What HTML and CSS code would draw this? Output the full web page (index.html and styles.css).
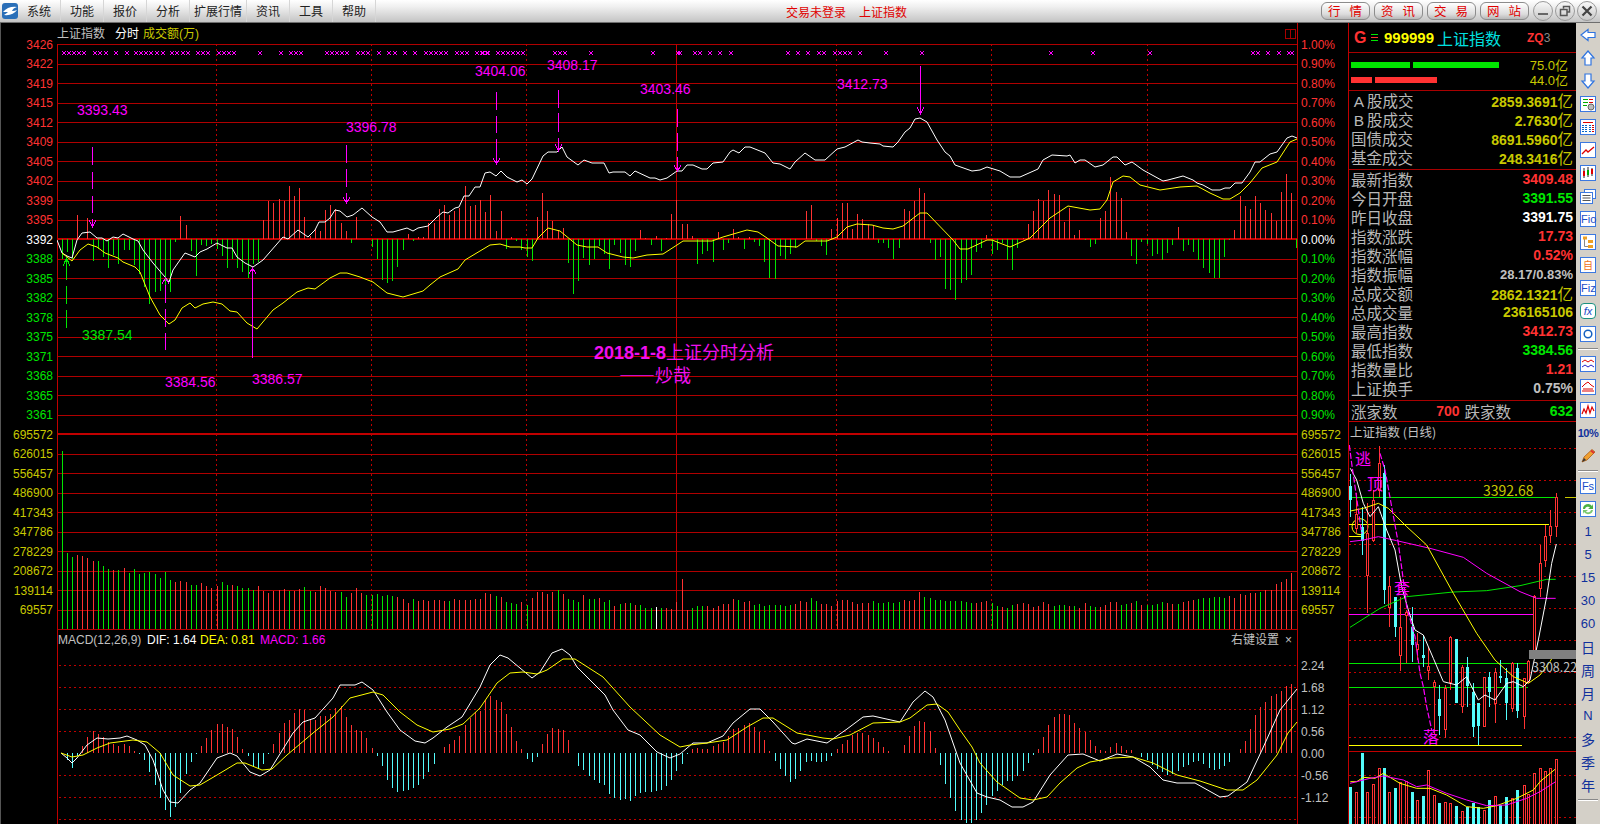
FILE: index.html
```html
<!DOCTYPE html>
<html lang="zh-CN">
<head>
<meta charset="utf-8">
<title>上证指数 分时</title>
<link rel="stylesheet" href="styles.css">
</head>
<body>
<div class="app">
  <header class="menubar">
    <svg class="logo" width="16" height="16" viewBox="0 0 16 16"><rect width="16" height="16" rx="3" fill="#2a6fb8"/><path d="M1 9 Q6 3 15 4 Q11 5 10 8 Q13 8 15 7 Q11 13 2 12 Q5 10 6 9 Z" fill="#fff"/></svg>
    <nav class="menu">
      <span class="menu-item">系统</span><span class="menu-item">功能</span><span class="menu-item">报价</span><span class="menu-item">分析</span><span class="menu-item menu-item-wide">扩展行情</span><span class="menu-item">资讯</span><span class="menu-item">工具</span><span class="menu-item">帮助</span>
    </nav>
    <div class="notice"><span>交易未登录</span><span>上证指数</span></div>
    <div class="links">
      <span class="pill">行情</span><span class="pill">资讯</span><span class="pill">交易</span><span class="pill">网站</span>
    </div>
    <div class="win-btns">
      <span class="win-btn"><svg width="12" height="12" viewBox="0 0 12 12"><rect x="1" y="8" width="10" height="2" fill="#666"/></svg></span>
      <span class="win-btn"><svg width="12" height="12" viewBox="0 0 12 12"><path d="M4.500 3.500V1.500H10.500V7H8M1.500 4.500H8V10.500H1.500Z" fill="none" stroke="#555" stroke-width="1.500"/></svg></span>
      <span class="win-btn"><svg width="12" height="12" viewBox="0 0 12 12"><path d="M1.500 1.500L10.500 10.500M10.500 1.500L1.500 10.500" stroke="#444" stroke-width="2.200"/></svg></span>
    </div>
  </header>

  <main class="workspace">
    <div class="axis axis-left">
      <div class="tick up">3426</div><div class="tick up">3422</div><div class="tick up">3419</div><div class="tick up">3415</div><div class="tick up">3412</div><div class="tick up">3409</div><div class="tick up">3405</div><div class="tick up">3402</div><div class="tick up">3399</div><div class="tick up">3395</div>
      <div class="tick flat">3392</div>
      <div class="tick down">3388</div><div class="tick down">3385</div><div class="tick down">3382</div><div class="tick down">3378</div><div class="tick down">3375</div><div class="tick down">3371</div><div class="tick down">3368</div><div class="tick down">3365</div><div class="tick down">3361</div>
      <div class="tick vol">695572</div><div class="tick vol">626015</div><div class="tick vol">556457</div><div class="tick vol">486900</div><div class="tick vol">417343</div><div class="tick vol">347786</div><div class="tick vol">278229</div><div class="tick vol">208672</div><div class="tick vol">139114</div><div class="tick vol">69557</div>
    </div>

    <svg id="main-chart" class="main-chart" width="1241" height="801" viewBox="57 23 1241 801">
      <g id="grid"></g>
      <g id="series"></g>
      <rect class="frame-icon" x="1285.500" y="29.500" width="10" height="9"/><path class="frame-icon" d="M1290.500 29.500V38.500"/>
      <text class="t-head gray" x="57" y="38">上证指数</text>
      <text class="t-head white" x="115" y="38">分时</text>
      <text class="t-head olive" x="143" y="38">成交额(万)</text>

      <path class="arrow" d="M92.500 147V165M92.500 172V189M92.500 196V213M92.500 219V227M89 220L92.500 227L96 220"/>
      <path class="arrow" d="M346.500 145V163M346.500 169V187M346.500 193V203M343 197L346.500 203L350 197"/>
      <path class="arrow" d="M496.500 92V110M496.500 116V133M496.500 139V164M493 158L496.500 164L500 158"/>
      <path class="arrow" d="M558.500 90V108M558.500 113V132M558.500 138V150M555 144L558.500 151L562 144"/>
      <path class="arrow" d="M677.500 109V127M677.500 133V151M677.500 157V171M674 165L677.500 171L681 165"/>
      <path class="arrow" d="M920.500 66V113M917 107L920.500 114L924 107"/>
      <path class="arrow" d="M165.500 285V303M165.500 309V327M165.500 333V350M162 284L165.500 278L169 284"/>
      <path class="arrow" d="M252.500 268V358M249 274L252.500 268L256 274"/>
      <path class="arrow arrow-green" d="M66.500 258V280M66.500 286V304M66.500 310V328M63 266L66.500 258L70 266"/>

      <text class="t-price" x="77" y="115">3393.43</text>
      <text class="t-price" x="346" y="132">3396.78</text>
      <text class="t-price" x="475" y="76">3404.06</text>
      <text class="t-price" x="547" y="70">3408.17</text>
      <text class="t-price" x="640" y="94">3403.46</text>
      <text class="t-price" x="837" y="89">3412.73</text>
      <text class="t-price" x="165" y="387">3384.56</text>
      <text class="t-price" x="252" y="384">3386.57</text>
      <text class="t-price t-price-green" x="82" y="340">3387.54</text>
      <text class="t-note" x="594" y="359"><tspan class="t-note-date">2018-1-8</tspan>上证分时分析</text>
      <text class="t-note" x="619" y="382">——炒哉</text>

      <text class="t-head gray" x="58" y="644">MACD(12,26,9)</text>
      <text class="t-head white" x="147" y="644">DIF: 1.64</text>
      <text class="t-head yellow" x="200" y="644">DEA: 0.81</text>
      <text class="t-head magenta" x="260" y="644">MACD: 1.66</text>
      <text class="t-head gray" x="1231" y="644">右键设置</text>
      <text class="t-head gray" x="1285" y="644">×</text>
    </svg>

    <div class="axis axis-right">
      <div class="tick up">1.00%</div><div class="tick up">0.90%</div><div class="tick up">0.80%</div><div class="tick up">0.70%</div><div class="tick up">0.60%</div><div class="tick up">0.50%</div><div class="tick up">0.40%</div><div class="tick up">0.30%</div><div class="tick up">0.20%</div><div class="tick up">0.10%</div>
      <div class="tick flat">0.00%</div>
      <div class="tick down">0.10%</div><div class="tick down">0.20%</div><div class="tick down">0.30%</div><div class="tick down">0.40%</div><div class="tick down">0.50%</div><div class="tick down">0.60%</div><div class="tick down">0.70%</div><div class="tick down">0.80%</div><div class="tick down">0.90%</div>
      <div class="tick vol">695572</div><div class="tick vol">626015</div><div class="tick vol">556457</div><div class="tick vol">486900</div><div class="tick vol">417343</div><div class="tick vol">347786</div><div class="tick vol">278229</div><div class="tick vol">208672</div><div class="tick vol">139114</div><div class="tick vol">69557</div>
      <div class="macd-ticks">
        <div class="tick-m">2.24</div><div class="tick-m">1.68</div><div class="tick-m">1.12</div><div class="tick-m">0.56</div><div class="tick-m">0.00</div><div class="tick-m">-0.56</div><div class="tick-m">-1.12</div>
      </div>
    </div>

    <aside class="quote">
      <div class="quote-head">
        <span class="q-g">G</span>
        <span class="q-menu"><i></i><i></i><i></i></span>
        <span class="q-code">999999</span>
        <span class="q-name">上证指数</span>
        <span class="q-zq">ZQ<em>3</em></span>
      </div>
      <div class="flow">
        <div class="flow-row"><span class="flow-bars"><i class="fb fb-g fb-59"></i><i class="fb fb-g fb-86"></i></span><span class="flow-val">75.0亿</span></div>
        <div class="flow-row"><span class="flow-bars"><i class="fb fb-r fb-21"></i><i class="fb fb-r fb-62"></i></span><span class="flow-val">44.0亿</span></div>
      </div>
      <div class="stats stats-a">
        <div class="stat"><span class="s-l"><b class="wide">A</b>股成交</span><span class="s-v olive">2859.3691<u>亿</u></span></div>
        <div class="stat"><span class="s-l"><b class="wide">B</b>股成交</span><span class="s-v olive">2.7630<u>亿</u></span></div>
        <div class="stat"><span class="s-l">国债成交</span><span class="s-v olive">8691.5960<u>亿</u></span></div>
        <div class="stat"><span class="s-l">基金成交</span><span class="s-v olive">248.3416<u>亿</u></span></div>
      </div>
      <div class="stats stats-b">
        <div class="stat"><span class="s-l">最新指数</span><span class="s-v red">3409.48</span></div>
        <div class="stat"><span class="s-l">今日开盘</span><span class="s-v green">3391.55</span></div>
        <div class="stat"><span class="s-l">昨日收盘</span><span class="s-v white">3391.75</span></div>
        <div class="stat"><span class="s-l">指数涨跌</span><span class="s-v red">17.73</span></div>
        <div class="stat"><span class="s-l">指数涨幅</span><span class="s-v red">0.52%</span></div>
        <div class="stat"><span class="s-l">指数振幅</span><span class="s-v gray s-small">28.17/0.83%</span></div>
        <div class="stat"><span class="s-l">总成交额</span><span class="s-v olive">2862.1321<u>亿</u></span></div>
        <div class="stat"><span class="s-l">总成交量</span><span class="s-v olive">236165106</span></div>
        <div class="stat"><span class="s-l">最高指数</span><span class="s-v red">3412.73</span></div>
        <div class="stat"><span class="s-l">最低指数</span><span class="s-v green">3384.56</span></div>
        <div class="stat"><span class="s-l">指数量比</span><span class="s-v red">1.21</span></div>
        <div class="stat"><span class="s-l">上证换手</span><span class="s-v gray">0.75%</span></div>
      </div>
      <div class="breadth"><span class="s-l">涨家数</span><span class="s-v red b-up">700</span><span class="s-l b-down">跌家数</span><span class="s-v green b-end">632</span></div>
      <div class="mini-title">上证指数 (日线)</div>
      <svg id="mini-chart" class="mini-chart" width="227" height="382" viewBox="1349 442 227 382">
        <g id="mini-series"></g>
        <rect class="mini-tag" x="1529" y="650" width="47" height="9"/>
        <text class="t-mini-val" x="1483" y="496">3392.68</text>
        <text class="t-mini-tag" x="1532" y="672">3308.22</text>
        <text class="t-mini-note" x="1355" y="465">逃</text>
        <text class="t-mini-note" x="1367" y="490">顶</text>
        <text class="t-mini-note" x="1394" y="594">套</text>
        <text class="t-mini-note" x="1423" y="743">落</text>
      </svg>
    </aside>

    <nav class="toolbar">
      <span class="tool"><svg class="ico" viewBox="0 0 16 16"><path class="ar" d="M1 8L8 2.500V5.500H15V10.500H8V13.500Z"/></svg></span>
      <span class="tool"><svg class="ico" viewBox="0 0 16 16"><path class="ar" d="M8 1L14 8H11V15H5V8H2Z"/></svg></span>
      <span class="tool"><svg class="ico" viewBox="0 0 16 16"><path class="ar" d="M8 15L14 8H11V1H5V8H2Z"/></svg></span>
      <span class="tool"><svg class="ico" viewBox="0 0 16 16"><rect class="bx" x=".5" y=".5" width="15" height="15"/><path d="M3 3.500H8M3 6.500H8M3 9.500H7" stroke="#0a0"/><path d="M9 3.500H13M9 6.500H13" stroke="#d00"/><circle cx="11" cy="11" r="3" fill="#bbb" stroke="#666"/></svg></span>
      <span class="tool"><svg class="ico" viewBox="0 0 16 16"><rect class="bx" x=".5" y=".5" width="15" height="15"/><path d="M3 3.500H13" stroke="#d00"/><path d="M3 6V13M6 6V13M10 6V13" stroke="#06c" stroke-dasharray="1 1" stroke-width="2"/><path d="M13 6V13" stroke="#d00" stroke-dasharray="1 1" stroke-width="2"/></svg></span>
      <span class="tool"><svg class="ico" viewBox="0 0 16 16"><rect class="bx" x=".5" y=".5" width="15" height="15"/><path d="M2 12L6 8L8 10L14 5" fill="none" stroke="#d00" stroke-width="1.300"/></svg></span>
      <span class="tool"><svg class="ico" viewBox="0 0 16 16"><rect class="bx" x=".5" y=".5" width="15" height="15"/><path d="M4 3V13M8 2V12M12 3V11" stroke="#222"/><rect x="3" y="6" width="2" height="5" fill="#d00"/><rect x="7" y="5" width="2" height="5" fill="#0a0"/><rect x="11" y="4" width="2" height="5" fill="#d00"/></svg></span>
      <span class="tool"><svg class="ico" viewBox="0 0 16 16"><rect x="4.500" y="1.500" width="11" height="9" fill="#fff" stroke="#3b78e0"/><rect x=".5" y="4.500" width="12" height="11" fill="#fff" stroke="#3b78e0"/><path d="M2.500 7.500H10.500M2.500 10H10.500M2.500 12.500H10.500" stroke="#555"/></svg></span>
      <span class="tool tool-box"><b class="ft">Fio</b></span>
      <span class="tool"><svg class="ico" viewBox="0 0 16 16"><rect class="bx" x=".5" y=".5" width="15" height="15"/><path d="M4.500 3V12.500H9" fill="none" stroke="#888"/><rect x="3" y="2.500" width="4" height="3" fill="#f0a020"/><rect x="8" y="6" width="5" height="3" fill="#f0a020"/><rect x="8" y="11" width="5" height="3" fill="#f0a020"/></svg></span>
      <span class="tool tool-box"><b class="ft ft-o">自</b></span>
      <span class="tool tool-box"><b class="ft">Fiz</b></span>
      <span class="tool tool-box tool-fx"><b class="ft">fx</b></span>
      <span class="tool"><svg class="ico" viewBox="0 0 16 16"><rect class="bx" x=".5" y=".5" width="15" height="15"/><circle cx="8" cy="8" r="3.800" fill="none" stroke="#1560c0" stroke-width="1.500"/></svg></span>
      <span class="tool-sep"></span>
      <span class="tool"><svg class="ico" viewBox="0 0 16 16"><rect class="bx" x=".5" y=".5" width="15" height="15"/><path d="M2 6L5 4L8 6L11 4L14 6" fill="none" stroke="#d00"/><path d="M2 11L5 9L8 11L11 9L14 11" fill="none" stroke="#22c"/></svg></span>
      <span class="tool"><svg class="ico" viewBox="0 0 16 16"><rect class="bx" x=".5" y=".5" width="15" height="15"/><path d="M2 8L5 5L8 3L11 6L14 8" fill="none" stroke="#d00"/><path d="M2 12H14M3 10H13" stroke="#d00"/></svg></span>
      <span class="tool"><svg class="ico" viewBox="0 0 16 16"><rect class="bx" x=".5" y=".5" width="15" height="15"/><path d="M2 12L4 7L6 11L8 4L10 11L12 5L14 9" fill="none" stroke="#d00" stroke-width="1.200"/></svg></span>
      <span class="tool tool-text tool-pct">10%</span>
      <span class="tool"><svg class="ico" viewBox="0 0 16 16"><path d="M2 14L4 9L12 1.500L15 4L7 12Z" fill="#f0a030" stroke="#a05010" stroke-width=".7"/><path d="M2 14L4 10L6 12Z" fill="#333"/><path d="M11 2.500L14 5" stroke="#d33" stroke-width="2"/></svg></span>
      <span class="tool-sep"></span>
      <span class="tool tool-box"><b class="ft">Fs</b></span>
      <span class="tool"><svg class="ico" viewBox="0 0 16 16"><rect class="bx" x=".5" y=".5" width="15" height="15"/><path d="M3 8A5 5 0 0 1 12 5L13 3V8H8L10 6.500A3 3 0 0 0 5 8Z" fill="#4bb043"/><path d="M13 9A5 5 0 0 1 4 11L3 13V9H8L6 10.500A3 3 0 0 0 11 9Z" fill="#7cc96f"/></svg></span>
      <span class="tool tool-text">1</span><span class="tool tool-text">5</span><span class="tool tool-text">15</span><span class="tool tool-text">30</span><span class="tool tool-text">60</span>
      <span class="tool tool-cjk">日</span><span class="tool tool-cjk">周</span><span class="tool tool-cjk">月</span><span class="tool tool-text">N</span><span class="tool tool-cjk">多</span><span class="tool tool-cjk">季</span><span class="tool tool-cjk">年</span>
      <span class="tool-sep"></span>
    </nav>
  </main>
</div>
<script src="chart.js"></script>
</body>
</html>
```
FILE: styles.css
```css
* { box-sizing: border-box; }
html, body { margin: 0; height: 100%; background: #000; overflow: hidden; }
body { font-family: "Liberation Sans", "Noto Sans CJK SC", sans-serif; }
.app { width: 1600px; height: 824px; display: flex; flex-direction: column; }

/* menu bar */
.menubar {
  height: 23px; flex: none; display: flex; align-items: center;
  background: linear-gradient(#ffffff, #f0f0f0 30%, #c4c4c4);
  border-bottom: 1px solid #6e6e6e;
  font-family: "Noto Sans CJK SC", sans-serif; font-size: 12px; color: #222;
}
.logo { margin-left: 2px; flex: none; }
.menu { display: flex; }
.menu-item { width: 43px; text-align: center; line-height: 22px; border-right: 1px solid #d6d6d6; }
.menu-item-wide { width: 57px; }
.notice { margin-left: 410px; color: #e00000; display: flex; gap: 13px; font-size: 12px; }
.links { margin-left: auto; display: flex; gap: 4px; }
.pill {
  width: 49px; height: 18px; line-height: 16px; text-align: left; color: #e00000;
  font-size: 12.500px; letter-spacing: 9px; padding-left: 6px; white-space: nowrap; overflow: hidden;
  border: 1px solid #8c8c8c; border-radius: 6px;
  background: linear-gradient(#fff, #dcdcdc 70%, #b8b8b8);
}
.win-btns { display: flex; gap: 2px; margin: 0 3px 0 4px; }
.win-btn {
  width: 20px; height: 20px; border-radius: 50%; border: 1px solid #999;
  background: linear-gradient(#f8f8f8, #c8c8c8);
  display: flex; align-items: center; justify-content: center;
}

/* work area */
.workspace { flex: 1; min-height: 0; display: flex; background: #000; }
.axis { flex: none; display: flex; flex-direction: column; padding-top: 12.500px; font-size: 12px; }
.axis-left { width: 57px; text-align: right; padding-right: 4px; border-left: 1px solid #555; }
.axis-right { width: 50px; padding-left: 3px; }
.tick { height: 19.500px; line-height: 19.500px; }
.up { color: #ff3232; }
.flat { color: #fff; }
.down { color: #00e600; }
.vol { color: #c8c800; }
.macd-ticks { margin-top: 34px; color: #c0c0c0; }
.tick-m { height: 22px; line-height: 22px; }
.main-chart { flex: none; display: block; }

/* chart text */
.t-head { font-size: 12px; }
.gray { fill: #c0c0c0; color: #c0c0c0; }
.white { fill: #fff; color: #fff; }
.olive { fill: #c8c800; color: #c8c800; }
.yellow { fill: #ffff00; }
.magenta { fill: #ff00ff; }
.red { color: #ff3232; }
.green { color: #00e600; }
.t-price { font-size: 14px; fill: #ff00ff; }
.t-price-green { fill: #00e600; }
.t-note { font-size: 18px; fill: #f010f0; font-family: "Noto Sans CJK SC", sans-serif; }
.t-note-date { font-weight: bold; font-family: "Liberation Sans", sans-serif; }
.arrow { fill: none; stroke: #ff00ff; stroke-width: 1; shape-rendering: crispEdges; }
.arrow-green { stroke: #00e600; }
.frame-icon { fill: none; stroke: #a80000; shape-rendering: crispEdges; }
.grid-line { stroke: #b00000; fill: none; }
.grid-thick { stroke: #c00000; stroke-width: 2; }
.grid-dot { stroke: #c00000; stroke-dasharray: 2 3; }
.grid-frame { stroke: #c00000; }
.s-bar { fill: none; stroke-width: 1; shape-rendering: crispEdges; }
.s-red { stroke: #ff3232; }
.s-green { stroke: #00e600; }
.s-cyan { stroke: #54fcfc; }
.s-white { stroke: #fff; }
.s-line { fill: none; stroke-width: 1; stroke-linejoin: round; }
.s-ylw { stroke: #ffff00; }
.s-wht { stroke: #ffffff; }
.s-mag { stroke: #ff00ff; }
.s-grn { stroke: #00e600; }
.s-crisp { shape-rendering: crispEdges; }
.marks { fill: none; stroke: #ff00ff; stroke-width: 1; }

/* quote panel */
.quote { width: 228px; flex: none; display: flex; flex-direction: column; border-left: 1px solid #c00000; font-family: "Noto Sans CJK SC", sans-serif; }
.quote-head { height: 30px; flex: none; display: flex; align-items: center; padding-left: 5px; border-bottom: 1px solid #a80000; }
.q-g { font: bold 16px "Liberation Sans", sans-serif; color: #ff3232; width: 17px; }
.q-menu { width: 13px; display: flex; flex-direction: column; gap: 2px; }
.q-menu i { display: block; width: 7px; height: 1px; background: #00e600; }
.q-menu i:nth-child(2) { background: #ff3232; }
.q-code { font: bold 15px "Liberation Sans", sans-serif; color: #ffff00; width: 53px; }
.q-name { font-size: 16px; color: #00e0e0; width: 90px; }
.q-zq { font: bold 12px "Liberation Sans", sans-serif; color: #ff3232; }
.q-zq em { font-style: normal; font-weight: normal; color: #888; }
.flow { height: 38px; flex: none; border-bottom: 1px solid #a80000; padding: 4px 8px 0 2px; display: flex; flex-direction: column; gap: 0; }
.flow-row { height: 15px; display: flex; justify-content: space-between; align-items: center; }
.flow-bars { display: flex; gap: 3px; }
.fb { display: block; height: 6px; }
.fb-g { background: #00e600; }
.fb-r { background: #ff3232; }
.fb-59 { width: 59px; }
.fb-86 { width: 86px; }
.fb-21 { width: 21px; }
.fb-62 { width: 62px; }
.flow-val { color: #c8c800; font: 13px "Liberation Sans", "Noto Sans CJK SC", sans-serif; }
.stats { flex: none; border-bottom: 1px solid #a80000; padding-bottom: 2px; }
.stat { height: 19px; display: flex; justify-content: space-between; align-items: center; padding: 0 3px 0 2px; }
.s-l { font-size: 15.500px; color: #b8b8b8; line-height: 19px; white-space: nowrap; }
.s-l b { font-weight: normal; }
.wide { display: inline-block; width: 16px; text-align: center; font-family: "Liberation Sans", sans-serif; }
.s-v { font: bold 14px "Liberation Sans", sans-serif; line-height: 19px; white-space: nowrap; }
.s-small { font-size: 13px; }
.s-v u { text-decoration: none; font: normal 15.500px "Noto Sans CJK SC", sans-serif; }
.breadth { height: 21px; flex: none; display: flex; align-items: center; padding: 0 3px 0 2px; border-bottom: 1px solid #c00000; }
.b-up { width: 62px; text-align: right; }
.b-down { margin-left: 5px; }
.b-end { margin-left: auto; }
.mini-title { height: 20px; flex: none; font-size: 12.500px; line-height: 20px; color: #c0c0c0; padding-left: 1px; }
.mini-chart { flex: none; display: block; }
.mini-tag { fill: #808080; }
.t-mini-val { font-size: 14px; fill: #c8c800; }
.t-mini-tag { font-size: 12.500px; fill: #c0c0c0; }
.t-mini-note { font: 16px "Noto Sans CJK SC", sans-serif; fill: #ff00ff; }
.k-body { stroke-width: 1; shape-rendering: crispEdges; }
.k-red { stroke: #ff3232; fill: #000; }
.k-cyan { stroke: #54fcfc; fill: #54fcfc; }
.m-line { stroke-width: 1; shape-rendering: crispEdges; fill: none; }
.m-dash { fill: none; stroke: #ff00ff; stroke-width: 1.200; stroke-dasharray: 6 2; }
.m-circle { fill: none; stroke: #ffff00; }

/* toolbar */
.toolbar { width: 24px; flex: none; display: flex; flex-direction: column; align-items: center; background: #d4d0c8; color: #10309c; }
.tool { height: 23px; width: 24px; flex: none; display: flex; align-items: center; justify-content: center; }
.ico { width: 16px; height: 16px; display: block; overflow: visible; }
.ar { fill: #fff; stroke: #2f74e0; stroke-width: 1.200; }
.bx { fill: #fff; stroke: #3b78e0; }
.tool-box .ft {
  display: block; width: 16px; height: 16px; background: #fff; border: 1px solid #3b78e0;
  text-align: center; font: normal 11px/14px "Liberation Sans", sans-serif; color: #1a4cc8;
}
.tool-box .ft-o { color: #f07020; font-family: "Noto Sans CJK SC", sans-serif; font-size: 10px; }
.tool-fx .ft { border-color: #1a9080; border-radius: 4px; font-style: italic; }
.tool-text { font: 13px "Liberation Sans", sans-serif; }
.tool-pct { font-weight: bold; font-size: 11px; letter-spacing: -0.5px; }
.tool-cjk { font: 14px "Noto Sans CJK SC", sans-serif; }
.tool-sep { height: 7px; width: 20px; flex: none; position: relative; background: linear-gradient(transparent 3px, #888 3px, #888 4px, #fff 4px, #fff 5px, transparent 5px); }
```
FILE: chart.js
```js
(function () {
  var NS = 'http://www.w3.org/2000/svg';
  function add(parent, tag, attrs) {
    var el = document.createElementNS(NS, tag);
    for (var k in attrs) el.setAttribute(k, attrs[k]);
    parent.appendChild(el);
    return el;
  }
  function barX(i) { return Math.round(61.5 + 5.167 * i) + 0.5; }

  /* capital-flow bars around the zero line, px: positive up (red), negative down (green) */
  var FLOW = [-20,-13,-20,24,0,21,-22,-10,-18,-29,-16,-25,-11,-11,-26,-35,-48,-65,-53,-52,-62,-53,-3,23,14,-12,-37,-6,-7,-5,-10,-17,-29,-20,-29,-33,-39,-25,-23,19,38,36,40,38,53,43,51,22,3,10,8,29,34,30,16,8,-4,22,0,0,-8,-20,-41,-44,-42,-28,-11,5,-2,2,2,16,16,30,34,24,28,31,53,33,34,39,27,44,8,28,-10,2,-2,-11,-18,-22,22,46,28,18,9,11,-24,-55,-42,-19,-26,-20,-7,-15,-30,-6,-14,-26,-28,-12,9,1,-6,3,-12,1,25,39,15,15,3,-25,-15,-12,-23,7,-11,-4,10,2,-10,2,-3,-7,-23,-39,-40,-17,-20,-15,-9,0,28,34,-2,-7,-16,10,21,36,36,10,25,20,15,14,-4,-4,-9,-20,-9,30,28,38,51,46,-4,-21,-18,-50,-51,-61,-44,-41,-36,-13,-9,4,-15,-11,-4,-21,-31,-9,1,15,28,40,38,49,45,44,17,31,4,9,-1,-8,-5,21,28,62,47,41,7,-17,-25,-3,-5,-17,-15,-21,-14,-6,12,-12,-6,-13,-21,-29,-34,-39,-39,-18,-1,9,43,33,30,43,36,29,26,18,47,65,46,-9];

  /* volume bars, height in px: positive red, negative green, "w" neutral */
  var VOL = [-178,-76,-72,74,73,71,68,-68,-63,-60,59,-59,61,-56,-60,-55,-56,-57,-55,-51,-57,-49,47,48,47,-44,-44,46,43,41,43,-47,-44,44,-43,-41,-41,-39,43,38,36,38,39,40,-38,38,40,-42,-38,37,43,41,38,37,-37,-32,36,41,36,-34,-34,-35,-33,-34,-33,32,30,26,-30,28,29,28,29,29,28,-28,30,29,29,29,30,
    30,36,35,-33,32,-27,-26,-25,27,-24,31,37,37,35,37,-39,35,-30,-29,-27,34,-30,-30,31,-27,-29,23,-25,26,-26,24,-24,-21,-21,'w',-21,21,20,27,50,19,-21,-23,-23,23,21,23,25,25,30,-29,27,28,-24,-25,-23,-24,-24,-24,-23,-24,25,28,27,-31,-28,25,25,23,28,29,29,27,25,26,26,-28,-26,-26,-27,-26,-27,
    29,28,29,37,-32,-31,-29,-29,-28,-28,-28,-28,-27,-26,26,27,28,-26,-23,22,-21,-24,25,26,25,22,23,27,25,-23,-24,-24,23,-23,21,26,-23,-22,22,24,27,27,-24,-25,26,-28,24,-24,-24,-25,-27,26,25,-25,27,28,29,-30,-31,-31,-32,-32,-31,33,31,35,34,36,36,-37,39,39,45,47,50,56];

  /* MACD histogram, px: positive red, negative cyan */
  var MACD = [0,-7,-15,-3,7,16,22,19,16,11,9,7,9,7,2,-1,-7,-19,-32,-45,-57,-64,-54,-40,-21,-9,-1,7,15,23,29,29,26,24,16,4,-3,-14,-16,-11,-1,9,20,30,33,40,44,43,33,33,37,37,39,45,47,36,28,23,22,15,5,-3,-13,-27,-35,-39,-38,-37,-35,-32,-26,-19,-11,0,6,9,13,17,28,35,41,42,53,57,53,51,39,26,12,4,-6,-9,-4,9,19,25,24,23,13,0,-13,-17,-23,-27,-30,-32,-41,-45,-47,-46,-48,-43,-40,-39,-39,-38,-37,-33,-27,-18,-11,-1,4,5,4,4,7,9,11,17,24,25,28,30,26,21,13,2,-8,-16,-23,-29,-26,-18,-9,-8,-9,-9,-8,-3,4,9,13,18,20,20,18,15,11,6,2,0,0,8,17,27,32,31,22,5,-12,-31,-45,-58,-67,-70,-70,-67,-60,-52,-43,-38,-32,-28,-28,-23,-18,-10,-2,4,16,28,36,39,39,38,30,25,21,13,7,3,2,6,10,7,3,3,0,-4,-7,-12,-16,-19,-22,-21,-18,-14,-12,-9,-8,-11,-15,-17,-16,-13,-9,0,4,12,24,38,46,51,57,59,62,67,69];

  var PRICE_W = [57,240,62,253,67,256,72,258,77,240,82,233,90,232,97,238,102,238,107,241,113,237,118,238,123,234,133,239,138,241,143,250,153,263,165,277,169,282,173,270,180,260,185,253,195,257,200,252,207,249,217,243,227,248,232,248,237,257,245,263,253,267,263,260,283,237,288,239,298,230,308,237,315,230,319,222,325,222,330,218,335,210,340,211,347,217,353,215,362,208,372,217,380,222,387,232,393,232,407,228,413,231,418,228,428,226,437,217,443,212,448,213,455,208,459,207,464,196,469,196,475,187,480,187,485,173,490,172,496,176,501,171,507,177,517,182,522,180,527,184,532,179,543,156,548,152,557,152,562,147,567,157,578,165,584,160,592,163,604,163,609,173,613,172,625,172,630,176,635,171,650,178,655,178,660,180,667,178,677,171,682,171,687,165,693,165,702,169,707,169,713,163,723,162,730,152,733,150,739,153,745,147,750,147,765,153,773,163,780,164,790,169,795,162,805,153,815,160,825,160,837,149,845,147,858,140,862,142,870,143,880,144,883,146,893,147,898,142,905,132,910,128,915,119,920,118,927,122,937,140,945,152,950,156,955,165,972,171,980,170,987,167,1000,171,1010,177,1020,177,1038,169,1043,160,1052,155,1067,156,1070,155,1075,163,1080,160,1085,160,1095,167,1103,165,1113,157,1117,157,1125,165,1132,162,1143,170,1163,181,1168,180,1183,176,1193,180,1197,183,1203,185,1212,190,1220,190,1225,188,1230,188,1235,183,1242,183,1250,172,1255,162,1260,162,1270,154,1277,152,1287,138,1292,136,1297,138];

  var PRICE_Y = [62,253,72,261,80,250,88,244,97,247,105,253,118,258,123,262,135,267,140,272,150,297,160,315,169,324,175,320,182,308,190,303,195,308,203,304,213,302,222,304,230,311,237,312,247,323,257,329,273,310,283,303,297,292,308,288,315,289,330,278,340,273,347,273,360,277,373,282,387,293,403,297,423,291,430,285,440,277,458,269,465,260,490,245,500,244,510,247,520,247,525,248,532,248,538,238,548,228,560,231,577,245,587,247,598,247,607,253,623,257,633,258,647,255,663,254,677,245,683,241,700,241,712,241,723,237,747,230,758,232,767,238,778,246,797,247,805,241,827,241,837,237,847,227,857,224,872,225,883,228,893,229,903,226,920,213,927,213,953,240,960,249,968,249,987,240,992,240,1010,247,1030,238,1050,218,1068,206,1090,210,1100,209,1107,200,1113,182,1123,176,1130,177,1140,185,1160,190,1180,187,1197,186,1210,193,1223,199,1230,199,1240,193,1250,183,1262,168,1277,162,1290,142,1297,139];

  var MACD_W = [61,753,67,758,72,763,77,758,87,745,97,738,108,739,120,738,127,736,137,740,145,745,153,760,163,790,170,802,178,803,190,790,200,783,217,758,230,753,237,756,250,772,260,776,270,770,293,733,303,722,315,718,333,698,340,685,355,685,362,682,373,690,387,712,400,730,415,741,425,743,433,738,447,727,462,717,480,687,490,665,500,655,508,658,520,668,532,678,540,672,552,653,562,649,570,655,577,667,587,677,605,695,613,710,628,730,640,735,657,752,670,758,680,754,693,743,707,743,723,736,733,723,750,709,760,709,773,722,792,743,795,744,807,739,827,743,847,729,863,717,873,716,900,722,913,702,925,691,933,697,945,720,960,763,977,793,987,797,1000,800,1012,807,1023,807,1033,802,1050,775,1068,755,1083,754,1100,761,1117,754,1133,757,1150,767,1163,780,1177,783,1195,783,1220,797,1228,796,1247,782,1262,750,1280,710,1297,689];

  var MACD_Y = [61,753,72,757,83,755,97,748,110,743,133,740,147,742,160,753,173,775,190,786,200,785,217,775,237,763,245,763,262,770,272,769,287,755,313,733,333,717,350,698,373,692,383,695,400,712,417,725,433,732,450,729,463,724,480,708,497,683,510,673,523,672,537,674,547,670,563,659,575,659,603,677,630,707,660,735,680,747,690,745,707,743,727,740,747,727,763,718,773,718,797,733,823,738,833,739,850,735,873,723,900,722,910,718,927,705,937,704,948,712,960,730,972,747,980,763,997,782,1020,798,1033,800,1047,797,1060,783,1077,768,1090,762,1113,758,1133,757,1153,763,1177,775,1200,781,1227,790,1243,790,1257,780,1277,755,1288,733,1297,722];

  var MARKS = [193,208,223,238,253,285,300,318,347,380,408,423,438,453,470,488,515,530,548,565,595,610,625,657,672,687,703,780,843,873,888,903,981,996,1011,1026,1041,1074,1089,1104,1137,1167,1185,1215,1245,1278,1293,1308,1323,1338,1371,1386,1401,1431,1446,1461].map(function (v) { return v / 3; })
    .concat([8,23,53,68,83,98,113,128,224,240,255,333,519,595,601,646,661,689,719,753,923,953,983,1016,1031,1064,1079,1094,1109,1139,1217,1325].map(function (v) { return 480 + v / 3; }))
    .concat([453,579,750,1059,1074,1104,1137,1167,1177].map(function (v) { return 900 + v / 3; }));

  function poly(parent, pts, cls) {
    var s = '';
    for (var i = 0; i < pts.length; i += 2) s += pts[i] + ',' + pts[i + 1] + ' ';
    return add(parent, 'polyline', { points: s, 'class': cls });
  }

  /* diverging: bars leave the base line in the sign's direction; rising: all bars stand on it */
  function bars(parent, data, base, upCls, downCls, rising) {
    var up = '', down = '', other = '';
    data.forEach(function (v, i) {
      if (!v) return;
      var x = barX(i);
      if (v === 'w') { other += 'M' + x + ' ' + base + 'v-22'; return; }
      if (v > 0) up += 'M' + x + ' ' + base + 'v' + (-v);
      else down += 'M' + x + ' ' + base + 'v' + (rising ? v : -v);
    });
    add(parent, 'path', { d: up, 'class': 's-bar ' + upCls });
    add(parent, 'path', { d: down, 'class': 's-bar ' + downCls });
    if (other) add(parent, 'path', { d: other, 'class': 's-bar s-white' });
  }

  /* main chart */
  var grid = document.getElementById('grid');
  var k, y;
  for (k = 0; k <= 30; k++) {
    y = Math.round(44 + 19.5 * k);
    var thick = k === 10 || k === 20;
    add(grid, 'line', { x1: 57, x2: 1297, y1: y + (thick ? 0 : 0.5), y2: y + (thick ? 0 : 0.5), 'class': thick ? 'grid-line grid-thick s-crisp' : 'grid-line s-crisp' });
  }
  [665, 687, 709, 731, 775, 797, 819].forEach(function (yy) {
    add(grid, 'line', { x1: 59, x2: 1297, y1: yy + 0.5, y2: yy + 0.5, 'class': 'grid-dot s-crisp' });
  });
  [216, 371, 526, 836, 991, 1147].forEach(function (xx) {
    add(grid, 'line', { x1: xx + 0.5, x2: xx + 0.5, y1: 44, y2: 629, 'class': 'grid-dot s-crisp' });
  });
  add(grid, 'line', { x1: 676.5, x2: 676.5, y1: 44, y2: 629, 'class': 'grid-frame s-crisp' });
  add(grid, 'line', { x1: 57.5, x2: 57.5, y1: 44, y2: 824, 'class': 'grid-frame s-crisp' });
  add(grid, 'line', { x1: 1297.5, x2: 1297.5, y1: 23, y2: 824, 'class': 'grid-frame s-crisp' });

  var series = document.getElementById('series');
  bars(series, FLOW, 239, 's-red', 's-green');
  bars(series, VOL, 629, 's-red', 's-green', true);
  bars(series, MACD, 753, 's-red', 's-cyan');
  poly(series, PRICE_W, 's-line s-wht');
  poly(series, PRICE_Y, 's-line s-ylw');
  poly(series, MACD_W, 's-line s-wht');
  poly(series, MACD_Y, 's-line s-ylw');
  var m = '';
  MARKS.forEach(function (v) {
    var x = Math.round(v);
    m += 'M' + (x - 2) + ' 51L' + (x + 2.5) + ' 55.5M' + (x + 2) + ' 51L' + (x - 2.5) + ' 55.5';
  });
  add(series, 'path', { d: m, 'class': 'marks s-crisp' });

  /* mini daily chart: numbers are measured on a 3x scale, origin (1320, 420) */
  function X(v) { return 1320 + v / 3; }
  function Y(v) { return 420 + v / 3; }
  function P(list) {
    var out = [];
    for (var i = 0; i < list.length; i += 2) out.push(X(list[i]), Y(list[i + 1]));
    return out;
  }
  var mini = document.getElementById('mini-series');

  [85, 180, 277, 373, 468, 565, 660, 757, 853, 950, 1065, 1190].forEach(function (v) {
    add(mini, 'line', { x1: 1349, x2: 1576, y1: Math.round(Y(v)) + 0.5, y2: Math.round(Y(v)) + 0.5, 'class': 'grid-dot s-crisp' });
  });
  add(mini, 'line', { x1: 1349, x2: 1576, y1: 751.5, y2: 751.5, 'class': 'grid-frame s-crisp' });

  function hline(v, from, to, color) {
    add(mini, 'line', { x1: X(from), x2: X(to), y1: Math.round(Y(v)) + 0.5, y2: Math.round(Y(v)) + 0.5, 'class': 'm-line', stroke: color });
  }
  hline(232, 85, 706, '#00e600');
  hline(232, 735, 768, '#c8c800');
  hline(311, 85, 688, '#ffff00');
  hline(349, 85, 125, '#ffff00');
  hline(583, 85, 640, '#ff00ff');
  hline(730, 85, 625, '#00e600');
  hline(802, 85, 625, '#00e600');
  hline(975, 85, 605, '#ffff00');
  add(mini, 'circle', { cx: X(120), cy: Y(320), r: 8, 'class': 'm-circle' });

  /* [x, wickTop, wickBottom, bodyTop, bodyBottom, red?] */
  var K = [[91,162,290,198,238,0],[108,220,340,283,325,1],[125,260,405,320,360,0],[142,250,578,340,465,1],[160,210,365,240,360,1],[177,78,230,130,210,1],[193,135,552,160,507,0],[208,468,620,498,562,1],[226,532,650,532,620,0],[241,530,752,622,705,1],[259,570,730,575,585,1],[275,560,725,620,672,0],[292,640,720,672,688,1],[310,645,740,705,712,0],[325,680,780,738,750,1],[343,780,945,787,800,1],[358,795,945,838,887,0],[376,795,955,805,928,1],[391,648,810,650,785,1],[409,658,850,658,848,0],[427,735,880,742,860,1],[442,712,860,740,793,0],[460,790,950,816,917,0],[475,850,975,850,915,0],[493,770,920,772,920,1],[508,755,860,772,815,0],[526,745,910,757,850,1],[541,720,790,768,772,0],[559,745,900,775,848,0],[577,725,875,728,862,1],[592,730,895,745,872,0],[611,775,928,775,890,1],[625,720,790,722,785,1],[643,525,690,527,688,1],[659,375,530,428,502,1],[676,315,442,347,418,1],[691,270,370,317,343,1],[709,220,350,232,320,1]];
  K.forEach(function (c) {
    var x = Math.round(X(c[0]));
    add(mini, 'line', { x1: x + 0.5, x2: x + 0.5, y1: Y(c[1]), y2: Y(c[2]), 'class': 'k-body ' + (c[5] ? 'k-red' : 'k-cyan') });
    add(mini, 'rect', { x: x - 1 + 0.5, y: Math.round(Y(c[3])) + 0.5, width: 2, height: Math.round((c[4] - c[3]) / 3), 'class': 'k-body ' + (c[5] ? 'k-red' : 'k-cyan') });
  });
  /* [x, top, red?] */
  var KV = [[91,1100,0],[108,1117,1],[125,1000,0],[142,1115,1],[160,1093,1],[177,1045,1],[193,1045,0],[208,1115,1],[226,1105,0],[241,1085,1],[259,1082,1],[275,1115,0],[292,1140,1],[310,1128,0],[325,1050,1],[343,1125,1],[358,1150,0],[376,1147,1],[391,1150,1],[409,1158,0],[427,1173,1],[442,1162,0],[460,1150,0],[475,1160,0],[493,1170,1],[508,1140,0],[526,1128,1],[541,1155,0],[559,1132,0],[577,1135,1],[592,1110,0],[611,1095,1],[625,1122,1],[643,1060,1],[659,1045,1],[676,1052,1],[691,1045,1],[709,1018,1]];
  KV.forEach(function (c) {
    var x = Math.round(X(c[0]));
    add(mini, 'rect', { x: x - 1 + 0.5, y: Math.round(Y(c[1])) + 0.5, width: 2, height: 824 - Math.round(Y(c[1])), 'class': 'k-body ' + (c[2] ? 'k-red' : 'k-cyan') });
  });

  poly(mini, P([90,622,180,565,260,530,400,516,500,512,600,497,680,478,707,478]), 's-line s-grn');
  poly(mini, P([90,365,130,360,175,350,230,362,330,385,430,412,500,460,600,515,650,535,707,535]), 's-line s-mag');
  poly(mini, P([91,273,130,265,175,250,205,265,260,320,320,375,400,520,470,640,525,720,580,770,625,790,660,765,690,725,707,695]), 's-line s-ylw');
  poly(mini, P([91,145,110,180,130,250,150,290,175,260,200,330,225,390,245,500,265,570,285,630,310,645,340,715,370,785,410,795,440,770,475,840,495,825,525,840,560,790,580,785,610,800,630,780,655,660,680,530,695,430,709,372]), 's-line s-wht');
  poly(mini, P([91,1085,110,1085,130,1072,165,1075,190,1060,240,1090,290,1105,330,1105,380,1125,440,1160,490,1165,530,1157,590,1135,640,1110,660,1085,705,1048]), 's-line s-ylw');
  poly(mini, P([90,1090,150,1075,190,1068,250,1080,290,1100,320,1095,380,1120,440,1140,500,1157,560,1155,620,1135,660,1115,707,1085]), 's-line s-mag');
  poly(mini, P([88,75,95,130,108,220,125,340]), 'm-dash');
  poly(mini, P([180,100,195,150,215,260,235,370,250,480,260,560,285,650,300,760,310,800,320,860,335,930]), 'm-dash');
})();
```
